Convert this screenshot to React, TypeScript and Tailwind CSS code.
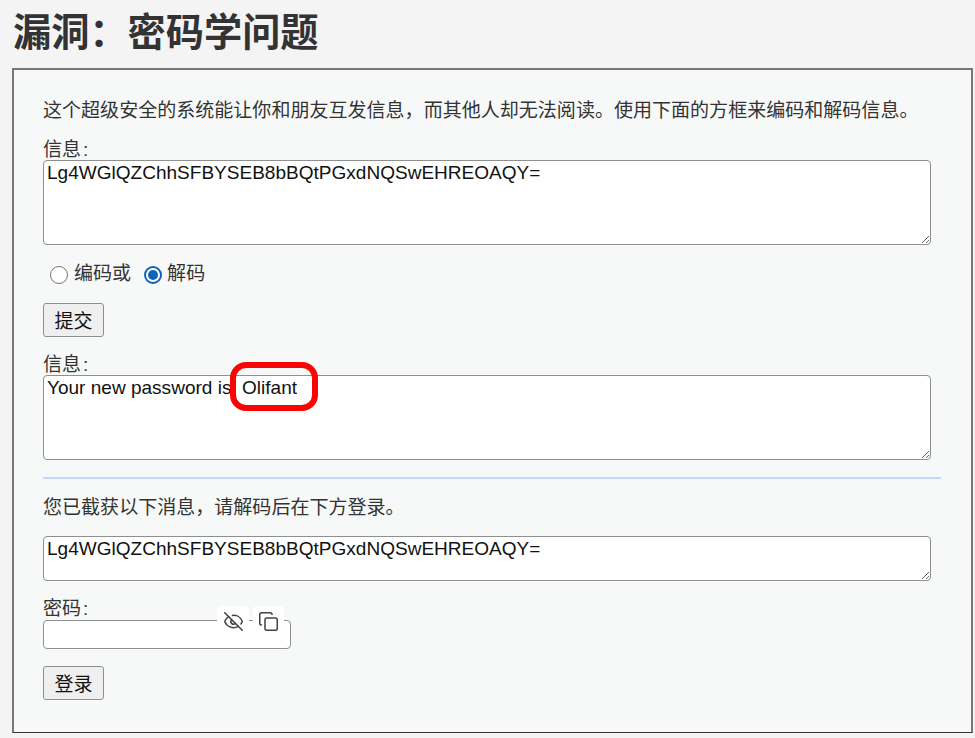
import { Copy, EyeOff } from 'lucide-react';

const cjk = "font-['Liberation_Sans','Noto_Sans_CJK_SC',sans-serif]";
const message = 'Lg4WGlQZChhSFBYSEB8bBQtPGxdNQSwEHREOAQY=';
const fieldClass =
  "block w-[888px] rounded-[4px] border border-[#8f8f8f] bg-white px-[3px] pt-[1px] pb-0 font-['Liberation_Sans',sans-serif] text-[19.05px] leading-[22px] text-[#111] outline-none";

function SubmitButton({ label }: { label: string }) {
  return (
    <button
      type="button"
      className="block h-[34px] w-[61px] rounded-[3px] border border-[#8f8f8f] bg-[#efefef] pt-[2px] text-[19px] leading-none text-[#111]"
    >
      {label}
    </button>
  );
}

function FieldLabel({ text, className }: { text: string; className: string }) {
  return (
    <label className={`block text-[19.05px] ${className}`}>
      {text}
      <span className="ml-[2px]">:</span>
    </label>
  );
}

export default function App() {
  return (
    <div className={`${cjk} h-[738px] w-[975px] overflow-hidden bg-[#f4f4f4] text-[#333]`}>
      <h1 className="ml-[13px] h-[68px] pt-[10px] text-[38.2px] leading-[46px] font-bold text-[#333]">漏洞：密码学问题</h1>
      <div className="ml-[12px] h-[665px] w-[961px] border-2 border-b border-[#777] border-b-[#333] bg-[#f7f9f9] pt-[28px] pl-[29px]">
        <p className="text-[19.05px] leading-[26px]">
          这个超级安全的系统能让你和朋友互发信息，而其他人却无法阅读。使用下面的方框来编码和解码信息。
        </p>
        <FieldLabel text="信息" className="mt-[15px] leading-[21px]" />
        <textarea readOnly defaultValue={message} className={`${fieldClass} h-[85px]`} />

        <div className="mt-[15px] flex h-[28px] items-center pl-[7px] text-[19.05px]">
          <span className="mt-[2px] h-[18px] w-[18px] rounded-full border border-[#767676] bg-white" />
          <span className="ml-[6px]">编码或</span>
          <span className="mt-[2px] ml-[13px] flex h-[18px] w-[18px] items-center justify-center rounded-full border-2 border-[#0f62b5] bg-white">
            <span className="h-[10px] w-[10px] rounded-full bg-[#0f62b5]" />
          </span>
          <span className="ml-[5px]">解码</span>
        </div>

        <div className="mt-[15px]">
          <SubmitButton label="提交" />
        </div>

        <FieldLabel text="信息" className="mt-[17px] leading-[21px]" />
        <div className="relative">
          <textarea readOnly defaultValue="Your new password is  Olifant" className={`${fieldClass} h-[85px]`} />
          <span className="absolute top-[-13px] left-[187px] h-[49px] w-[88px] rounded-[16px] border-[6px] border-[#fa0505]" />
        </div>

        <hr className="mt-[17px] ml-0 w-[898px] border-0 border-t-2 border-[#c2d9ff]" />

        <p className="mt-[16px] text-[19.05px] leading-[26px]">您已截获以下消息，请解码后在下方登录。</p>
        <textarea readOnly defaultValue={message} className={`${fieldClass} mt-[15px] h-[45px]`} />

        <FieldLabel text="密码" className="mt-[17px] leading-[22px]" />
        <div className="relative w-[248px]">
          <input className="block h-[29px] w-[248px] rounded-[4px] border border-[#8f8f8f] bg-white" />
          <span className="absolute top-[-14px] left-[174px] flex h-[30px] w-[32px] items-center justify-center rounded-[4px] bg-white text-[#444]">
            <EyeOff size={21} strokeWidth={1.75} />
          </span>
          <span className="absolute top-[-14px] left-[210px] flex h-[30px] w-[31px] items-center justify-center rounded-[4px] bg-white text-[#444]">
            <Copy size={21} strokeWidth={1.75} />
          </span>
        </div>

        <div className="mt-[17px]">
          <SubmitButton label="登录" />
        </div>
      </div>
    </div>
  );
}
